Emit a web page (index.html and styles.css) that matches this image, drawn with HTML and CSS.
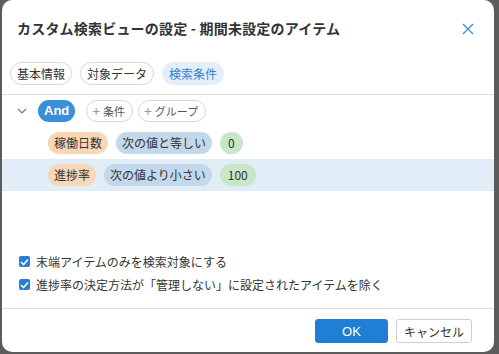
FILE: index.html
```html
<!DOCTYPE html>
<html lang="ja">
<head>
    <meta charset="UTF-8">
    <title>カスタム検索ビューの設定</title>
    <link rel="stylesheet" href="styles.css">
</head>
<body>
    <div class="dialog">
        <div class="dialog-header">
            <h1>カスタム検索ビューの設定 - 期間未設定のアイテム</h1>
            <svg class="close" width="12" height="12" viewBox="0 0 12 12"><path d="M1 1L11 11M11 1L1 11" stroke="#3a8fd8" stroke-width="1.3" fill="none"/></svg>
        </div>

        <div class="tabs">
            <span class="tab">基本情報</span>
            <span class="tab">対象データ</span>
            <span class="tab active">検索条件</span>
        </div>

        <div class="tree">
            <div class="group-row">
                <svg class="chevron" width="10" height="6" viewBox="0 0 10 6"><path d="M1 1L5 5L9 1" stroke="#777" stroke-width="1.2" fill="none"/></svg>
                <span class="and-pill">And</span>
                <span class="add-pill"><b>+</b>条件</span>
                <span class="add-pill"><b>+</b>グループ</span>
            </div>
            <div class="cond-row">
                <span class="pill field">稼働日数</span>
                <span class="pill op">次の値と等しい</span>
                <span class="pill val">0</span>
            </div>
            <div class="cond-row selected">
                <span class="pill field">進捗率</span>
                <span class="pill op">次の値より小さい</span>
                <span class="pill val">100</span>
            </div>
        </div>

        <div class="options">
            <label class="check"><span class="box"><svg width="9" height="8" viewBox="0 0 9 8"><path d="M1 4L3.5 6.5L8 1.5" stroke="#fff" stroke-width="1.6" fill="none"/></svg></span>末端アイテムのみを検索対象にする</label>
            <label class="check"><span class="box"><svg width="9" height="8" viewBox="0 0 9 8"><path d="M1 4L3.5 6.5L8 1.5" stroke="#fff" stroke-width="1.6" fill="none"/></svg></span>進捗率の決定方法が「管理しない」に設定されたアイテムを除く</label>
        </div>

        <div class="dialog-footer">
            <button class="btn primary">OK</button>
            <button class="btn">キャンセル</button>
        </div>
    </div>
</body>
</html>
```

FILE: styles.css
```css
body { margin: 0; background: #5c5c5c; font-family: "Noto Sans CJK JP", "Noto Sans", sans-serif; font-size: 12px; color: #333; }
.dialog { width: 492px; height: 352px; margin-left: 2px; background: white; border-radius: 10px; display: flex; flex-direction: column; overflow: hidden; }
.dialog > * { flex-shrink: 0; }

.dialog-header { display: flex; align-items: center; justify-content: space-between; padding: 16px 20px 0 15px; height: 24px; }
.dialog-header h1 { margin: 0; font-size: 14px; font-weight: bold; color: #333; letter-spacing: 0.2px; }
.close { margin-top: 2px; }

.tabs { display: flex; gap: 8px; padding: 0 8px 9px; margin-top: 22px; height: 23px; border-bottom: 1px solid #ddd; }
.tab { display: flex; align-items: center; padding: 0 6px; border: 1px solid #d8d8d8; border-radius: 12px; color: #333; }
.tab.active { background: #e4eef9; border-color: #e4eef9; color: #2f7fd1; }

.tree { display: flex; flex-direction: column; padding-top: 5px; }
.group-row { display: flex; align-items: center; gap: 5px; height: 22px; padding-left: 15px; }
.chevron { margin-right: 6px; }
.and-pill { background: #3a8fd8; color: white; font-family: "Liberation Sans", Arial, sans-serif; font-size: 13px; font-weight: bold; height: 22px; line-height: 22px; padding: 0 6px; border-radius: 11px; margin-right: 6px; }
.add-pill { display: flex; align-items: center; gap: 3px; height: 20px; padding: 0 7px 0 5px; border: 1px solid #d8d8d8; border-radius: 11px; color: #555; font-size: 11px; }
.add-pill b { font-weight: normal; color: #999; font-size: 14px; }

.cond-row { display: flex; align-items: center; gap: 8px; padding-left: 46px; height: 32px; margin-top: 5px; }
.cond-row.selected { background: #e0edf7; margin-top: 0; }
.pill { height: 22px; line-height: 22px; padding: 0 6px; border-radius: 11px; color: #333; }
.pill.field { background: #f9d6b7; }
.pill.op { background: #c3d8ea; }
.pill.val { background: #c8e7c8; padding: 0 8px; }

.options { display: flex; flex-direction: column; gap: 6px; padding: 62px 0 0 17px; flex: 1; }
.check { display: flex; align-items: center; gap: 6px; height: 17px; font-size: 12px; }
.box { width: 11px; height: 11px; background: #2b7cd3; border-radius: 2px; display: flex; align-items: center; justify-content: center; }

.dialog-footer { display: flex; justify-content: flex-end; gap: 8px; padding: 10px 22px 9px 0; border-top: 1px solid #ddd; }
.btn { height: 24px; padding: 0 7px; border: 1px solid #d0d0d0; border-radius: 3px; background: white; font-family: inherit; font-size: 12px; color: #333; }
.btn.primary { width: 73px; background: #1e7fd4; border-color: #1e7fd4; color: white; font-family: "Liberation Sans", Arial, sans-serif; font-size: 13px; }
```
